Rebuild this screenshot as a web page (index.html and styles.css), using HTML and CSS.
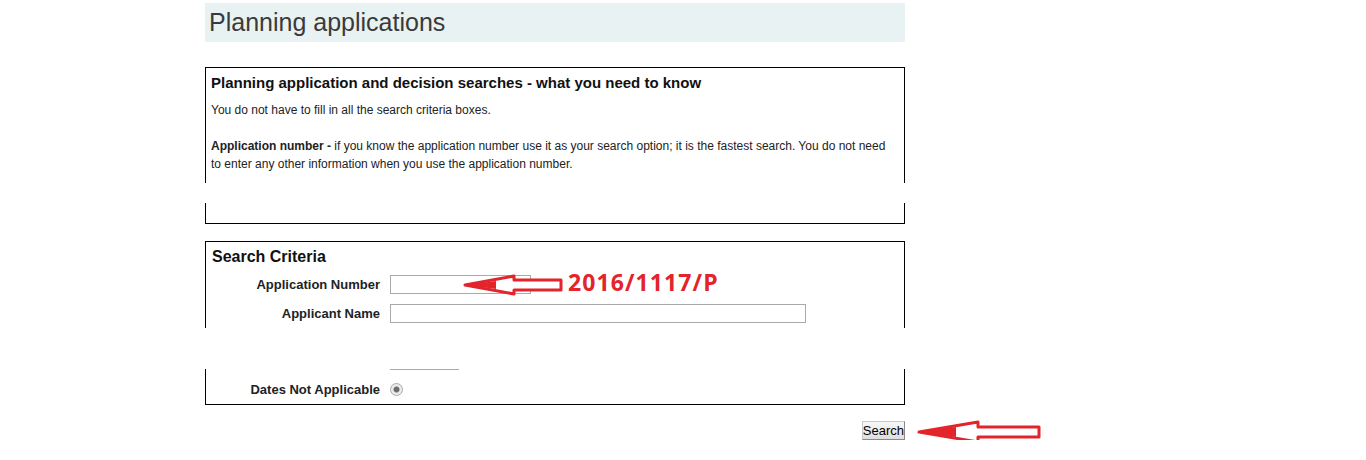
FILE: index.html
```html
<!DOCTYPE html>
<html lang="en">
<head>
<meta charset="UTF-8">
<meta name="viewport" content="width=device-width, initial-scale=1.0">
<title>Planning applications</title>
<link rel="stylesheet" href="styles.css">
</head>
<body>

<div class="page">
  <h1 class="title">Planning applications</h1>

  <div class="box info">
    <h2>Planning application and decision searches - what you need to know</h2>
    <p>You do not have to fill in all the search criteria boxes.</p>
    <p><b>Application number -</b> <span>if you know the application number use it as your search option; it is the fastest search. You do not need to enter any other information when you use the application number.</span></p>
    <div class="cut cut-info"></div>
  </div>

  <form class="box criteria" onsubmit="return false">
    <h3>Search Criteria</h3>
    <div class="fields">
      <label for="appNo">Application Number</label>
      <input type="text" id="appNo" class="short">
      <label for="appName">Applicant Name</label>
      <input type="text" id="appName" class="long">
      <label for="dateFrom" class="date-label">Date Received From</label>
      <input type="text" id="dateFrom" class="date">
      <label for="noDates">Dates Not Applicable</label>
      <div><input type="radio" id="noDates" class="radio" checked></div>
    </div>
    <div class="cut cut-criteria"></div>
  </form>

  <div class="actions">
    <button type="button">Search</button>
  </div>

  <!-- annotations drawn over the screenshot -->
  <svg class="arrow arrow-number" width="104" height="24" viewBox="0 0 104 24">
    <path d="M3 12 L52 3 L52 7 L99 7 L99 17 L52 17 L52 21 Z" fill="#fff" stroke="#e3242b" stroke-width="3" stroke-linejoin="round"/>
    <path d="M3 12 L34 8 L34 16 Z" fill="#e3242b"/>
  </svg>
  <span class="note">2016/1117/P</span>

  <svg class="arrow arrow-search" width="128" height="26" viewBox="0 0 128 26">
    <path d="M3 13 L62 3 L62 8 L123 8 L123 18 L62 18 L62 23 Z" fill="#fff" stroke="#e3242b" stroke-width="3" stroke-linejoin="round"/>
    <path d="M3 13 L40 8 L40 18 Z" fill="#e3242b"/>
  </svg>
</div>

</body>
</html>
```

FILE: styles.css
```css
body {
  font-family: "Liberation Sans", Arial, sans-serif;
  margin: 0;
  padding: 0;
  background: #fff;
  color: #222;
}
.page {
  position: relative;
  width: 700px;
  margin-left: 205px;
  padding-top: 3px;
}
.title {
  margin: 0;
  height: 39px;
  padding-left: 4px;
  background-color: #e9f2f2;
  color: #3a3a3a;
  font-size: 25px;
  font-weight: normal;
  line-height: 39px;
}
.box {
  position: relative;
  border: 1px solid #000;
}
.info {
  margin-top: 25px;
  padding: 5px 5px 50px 5px;
}
.info h2 {
  margin: 0;
  font-size: 15px;
  line-height: 20px;
  color: #111;
}
.info p {
  margin: 8px 0 0 0;
  padding-right: 8px;
  font-size: 12px;
  line-height: 18px;
}
.info p + p {
  margin-top: 18px;
}
.cut {
  position: absolute;
  left: -2px;
  right: -2px;
  background: #fff;
}
.cut-info {
  top: 115px;
  height: 20px;
}
.criteria {
  margin-top: 17px;
  padding: 5px 6px 6px 6px;
}
.criteria h3 {
  margin: 0;
  font-size: 16px;
  line-height: 20px;
  color: #111;
}
.fields {
  display: grid;
  grid-template-columns: 168px 1fr;
  column-gap: 10px;
  row-gap: 10px;
  align-items: center;
  margin-top: 8px;
}
.fields label {
  text-align: right;
  font-size: 13px;
  font-weight: bold;
  color: #222;
}
.fields input[type="text"] {
  height: 19px;
  box-sizing: border-box;
  border: 1px solid #aaa;
  margin: 0;
  padding: 1px 3px;
}
.short {
  width: 141px;
}
.long {
  width: 416px;
}
.date {
  width: 69px;
  margin-top: 18px !important;
}
.radio {
  appearance: none;
  -webkit-appearance: none;
  box-sizing: border-box;
  margin: 0;
  width: 13px;
  height: 13px;
  border: 1px solid #a9a9a9;
  border-radius: 50%;
  background: radial-gradient(circle, #6d6d6d 0, #6d6d6d 2.5px, #ececec 3.5px);
  vertical-align: middle;
}
.cut-criteria {
  top: 86px;
  height: 41px;
}
.actions {
  display: flex;
  justify-content: flex-end;
  margin-top: 16px;
}
.actions button {
  font-family: "Liberation Sans", Arial, sans-serif;
  font-size: 13px;
  height: 19px;
  padding: 0;
  border: 1px solid #8a8a8a;
  border-top-color: #c8c8c8;
  border-left-color: #c8c8c8;
  border-radius: 0;
  background: linear-gradient(#f8f8f8, #dedede);
  color: #000;
}
.arrow {
  position: absolute;
}
.arrow-number {
  left: 257px;
  top: 273px;
}
.arrow-search {
  left: 711px;
  top: 419px;
}
.note {
  position: absolute;
  left: 363px;
  top: 266px;
  font-family: "Open Sans", sans-serif;
  font-weight: 700;
  font-size: 23px;
  letter-spacing: 1.1px;
  color: #e3242b;
}
```
